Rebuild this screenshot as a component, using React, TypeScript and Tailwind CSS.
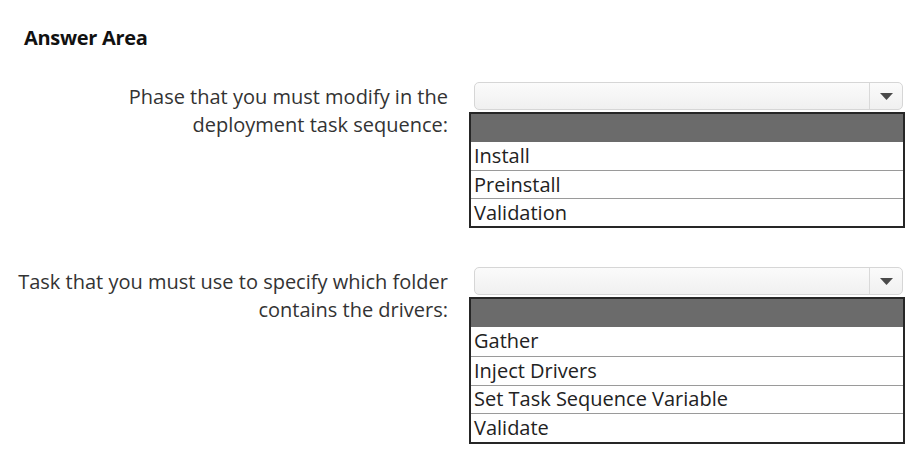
const Dropdown = () => (
  <div className="ml-[5px] mr-[2px] flex h-[28px] rounded-[5px] border border-[#d6d6d6] bg-gradient-to-b from-[#fbfbfb] to-[#f0f0f0]">
    <div className="flex-1" />
    <div className="flex w-[33px] items-center justify-center border-l border-[#d9d9d9]">
      <svg width="13" height="7" viewBox="0 0 13 7">
        <polygon points="0,0 13,0 6.5,7" fill="#4a4a4a" />
      </svg>
    </div>
  </div>
);

const OptionList = ({ items, tall }: { items: string[]; tall?: boolean }) => (
  <div className="mt-[2px] border-2 border-[#262626] bg-white">
    <div className="h-[28px] bg-[#6b6b6b]" />
    {items.map((item, i) => (
      <div
        key={item}
        className={`flex items-center pl-[3px] text-[20px] text-[#222] ${
          tall ? "h-[28.75px]" : "h-[28px]"
        } ${i > 0 ? "border-t border-[#9a9a9a]" : ""}`}
      >
        {item}
      </div>
    ))}
  </div>
);

const Question = ({
  lines,
  items,
  tall,
}: {
  lines: string[];
  items: string[];
  tall?: boolean;
}) => (
  <div className="flex">
    <div className="w-[448px] pt-[1px] text-right text-[20px] leading-[28px] text-[#333]">
      {lines.map((l) => (
        <div key={l}>{l}</div>
      ))}
    </div>
    <div className="ml-[21px] w-[436px]">
      <Dropdown />
      <OptionList items={items} tall={tall} />
    </div>
  </div>
);

export default function App() {
  return (
    <div
      className="h-[457px] w-[911px] overflow-hidden bg-white"
      style={{ fontFamily: '"Open Sans", "Noto Sans", sans-serif' }}
    >
      <h1 className="pl-[24px] pt-[25px] text-[20px] font-bold leading-[26px] tracking-[-0.3px] text-[#111]">
        Answer Area
      </h1>
      <div className="mt-[31px]">
        <Question
          lines={["Phase that you must modify in the", "deployment task sequence:"]}
          items={["Install", "Preinstall", "Validation"]}
        />
      </div>
      <div className="mt-[39px]">
        <Question
          lines={[
            "Task that you must use to specify which folder",
            "contains the drivers:",
          ]}
          items={["Gather", "Inject Drivers", "Set Task Sequence Variable", "Validate"]}
          tall
        />
      </div>
    </div>
  );
}
